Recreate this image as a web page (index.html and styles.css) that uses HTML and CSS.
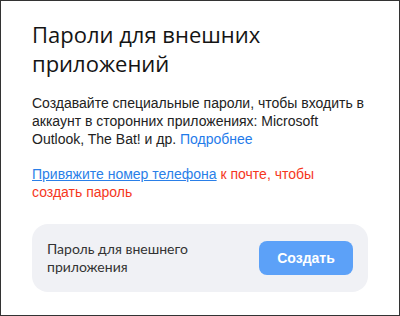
FILE: index.html
```html
<!DOCTYPE html>
<html lang="ru">
<head>
    <meta charset="UTF-8">
    <meta name="viewport" content="width=device-width, initial-scale=1.0">
    <title>Пароли для внешних приложений</title>
    <link rel="stylesheet" href="styles.css">
</head>
<body>
    <div class="panel">
        <h1 class="titulo">Пароли для внешних приложений</h1>
        <p class="descripcion">
            Создавайте специальные пароли, чтобы входить в аккаунт в сторонних приложениях: Microsoft Outlook, The Bat! и др.
            <a href="#" class="enlace">Подробнее</a>
        </p>
        <p class="aviso">
            <a href="#" class="enlace-telefono">Привяжите номер телефона</a> к почте, чтобы создать пароль
        </p>
        <div class="tarjeta">
            <span class="tarjeta-texto">Пароль для внешнего приложения</span>
            <button class="boton-crear">Создать</button>
        </div>
    </div>
</body>
</html>
```

FILE: styles.css
```css
* {
    box-sizing: border-box;
}

body {
    margin: 0;
    background: #fff;
    font-family: "Liberation Sans", Arial, sans-serif;
}

.panel {
    width: 400px;
    height: 316px;
    border: 1px solid #333;
    padding: 19px 31px 0 31px;
}

.titulo {
    margin: 0;
    font-family: "Open Sans", "Noto Sans", sans-serif;
    font-weight: 400;
    font-size: 22px;
    line-height: 29px;
    color: #141414;
}

.descripcion {
    margin: 16px 0 0;
    font-size: 14px;
    line-height: 18px;
    color: #222;
}

.enlace {
    color: #1f7bea;
    text-decoration: none;
}

.aviso {
    margin: 17px 0 0;
    font-size: 14px;
    line-height: 18px;
    color: #f5371d;
}

.enlace-telefono {
    color: #2a7fe8;
    text-decoration: underline;
}

.tarjeta {
    margin-top: 23px;
    display: flex;
    align-items: center;
    justify-content: space-between;
    height: 68px;
    padding: 0 15px;
    background: #f0f1f5;
    border-radius: 16px;
}

.tarjeta-texto {
    width: 170px;
    font-family: Lato, "Noto Sans", sans-serif;
    font-size: 14px;
    line-height: 18px;
    color: #333;
}

.boton-crear {
    width: 94px;
    height: 34px;
    border: none;
    border-radius: 8px;
    background: #5ca1f8;
    color: #fff;
    font-family: "Liberation Sans", Arial, sans-serif;
    font-weight: 700;
    font-size: 14px;
    cursor: pointer;
}
```
